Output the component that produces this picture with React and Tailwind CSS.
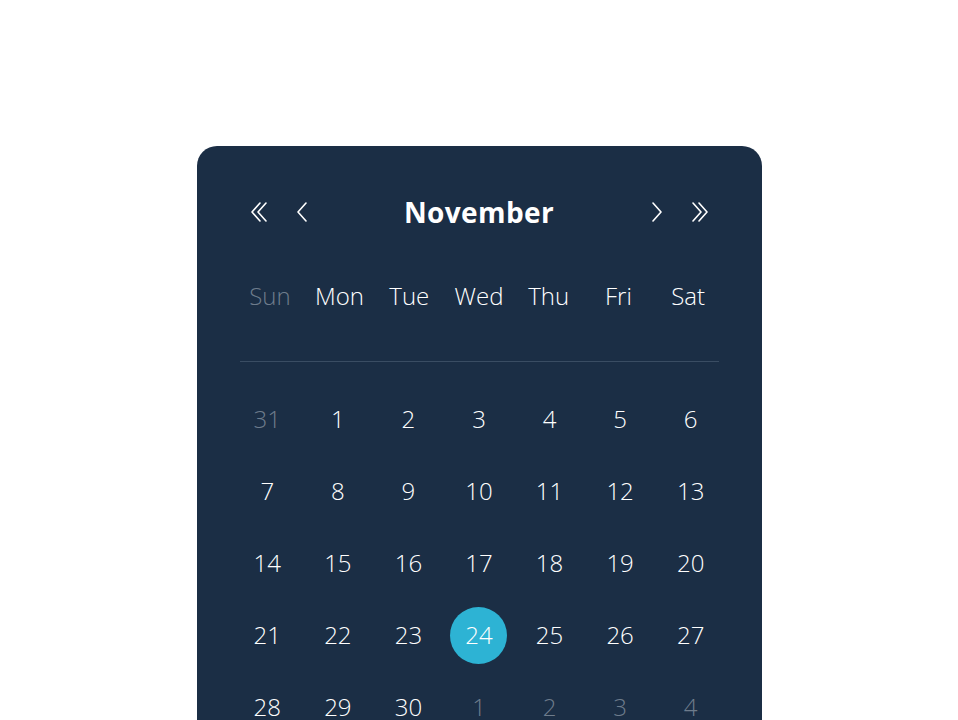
const days = ['Sun', 'Mon', 'Tue', 'Wed', 'Thu', 'Fri', 'Sat'];

const dates = [
  { d: 31, muted: true },
  ...Array.from({ length: 30 }, (_, i) => ({ d: i + 1 })),
  { d: 1, muted: true },
  { d: 2, muted: true },
  { d: 3, muted: true },
  { d: 4, muted: true },
];

const Chevron = ({ dir = 'left', double = false }) => (
  <svg
    width={double ? 18 : 12}
    height="20"
    viewBox={double ? '0 0 18 20' : '0 0 12 20'}
    fill="none"
    stroke="white"
    strokeWidth="1.6"
    strokeLinecap="round"
    strokeLinejoin="round"
    className={dir === 'right' ? 'rotate-180' : ''}
  >
    {double ? (
      <>
        <path d="M10 1 L2 10 L10 19" />
        <path d="M16 1 L8 10 L16 19" />
      </>
    ) : (
      <path d="M10 1 L2 10 L10 19" />
    )}
  </svg>
);

export default function App() {
  return (
    <div className="w-full h-[720px] bg-white overflow-hidden">
      <div className="pt-[146px] flex justify-center">
        <div className="w-[565px] h-[640px] bg-[#1b2e45] rounded-[20px] font-['Open_Sans',sans-serif] text-white">
          <div className="flex items-center h-[40px] mt-[46px] px-[53px]">
            <div className="flex items-center gap-[28px] w-[60px]">
              <Chevron double />
              <Chevron />
            </div>
            <div className="flex-1 text-center text-[28px] font-bold tracking-[0.4px] leading-none">November</div>
            <div className="flex items-center gap-[28px] w-[60px] justify-end">
              <Chevron dir="right" />
              <Chevron dir="right" double />
            </div>
          </div>

          <div className="w-[488px] mx-auto grid grid-cols-7 mt-[52px] text-[24px] font-light leading-none">
            {days.map((d, i) => (
              <div key={d} className={`text-center ${i === 0 ? 'text-[#6e7c8c]' : 'text-white'}`}>{d}</div>
            ))}
          </div>

          <div className="w-[479px] mx-auto h-px bg-[#3a4d63] mt-[53px]" />

          <div className="w-[494px] mx-auto grid grid-cols-7 mt-[21px] text-[24px] font-light">
            {dates.map((x, i) => (
              <div key={i} className="h-[72px] flex items-center justify-center">
                {x.d === 24 && !x.muted ? (
                  <span className="w-[57px] h-[57px] rounded-full bg-[#2db3d4] flex items-center justify-center">24</span>
                ) : (
                  <span className={x.muted ? 'text-[#6e7c8c]' : 'text-white'}>{x.d}</span>
                )}
              </div>
            ))}
          </div>
        </div>
      </div>
    </div>
  );
}
